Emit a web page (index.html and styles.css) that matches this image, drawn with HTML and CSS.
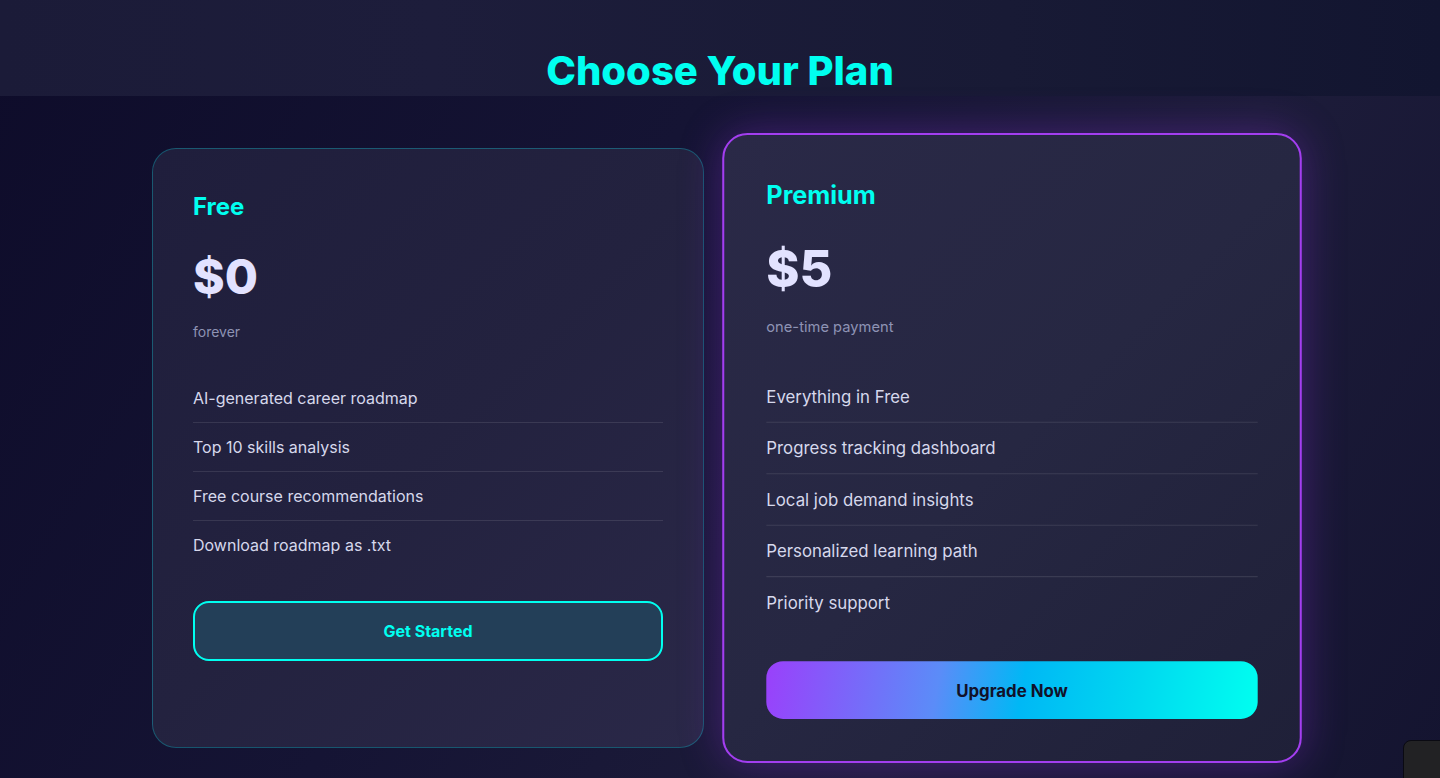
FILE: index.html
```html
<!DOCTYPE html>
<html lang="en">
<head>
<meta charset="utf-8">
<title>Choose Your Plan</title>
<link rel="stylesheet" href="styles.css">
</head>
<body>
<header class="top">
  <h1 class="title">Choose Your Plan</h1>
</header>
<main class="plans">
  <section class="card card-free">
    <h3 class="plan-name">Free</h3>
    <div class="price">$0</div>
    <p class="period">forever</p>
    <ul class="features">
      <li>AI-generated career roadmap</li>
      <li>Top 10 skills analysis</li>
      <li>Free course recommendations</li>
      <li>Download roadmap as .txt</li>
    </ul>
    <button class="btn btn-outline">Get Started</button>
  </section>
  <section class="card card-premium">
    <h3 class="plan-name">Premium</h3>
    <div class="price">$5</div>
    <p class="period">one-time payment</p>
    <ul class="features">
      <li>Everything in Free</li>
      <li>Progress tracking dashboard</li>
      <li>Local job demand insights</li>
      <li>Personalized learning path</li>
      <li>Priority support</li>
    </ul>
    <button class="btn btn-gradient">Upgrade Now</button>
  </section>
</main>
<div class="corner-widget"></div>
</body>
</html>
```
FILE: styles.css
```css
* { box-sizing: border-box; }
html, body { height: 100%; }
body {
  margin: 0;
  font-family: "Inter", "Noto Sans", sans-serif;
  background: linear-gradient(120deg, #0e0c2a 0%, #151434 40%, #1d1c3a 70%, #141430 100%);
  color: #e0e0ff;
  overflow: hidden;
  position: relative;
}
.top {
  height: 96px;
  background: linear-gradient(90deg, #1b1b38 0%, #1d1d3b 30%, #181a35 70%, #121530 100%);
  display: flex;
  justify-content: center;
  align-items: flex-end;
}
.title {
  margin: 0 0 1px;
  font-size: 40px;
  line-height: 48px;
  font-weight: 800;
  color: #00fff0;
  letter-spacing: 0;
}
.plans {
  max-width: 1136px;
  margin: 0 auto;
  padding-top: 52px;
  display: grid;
  grid-template-columns: 1fr 1fr;
  gap: 32px;
}
.card {
  border-radius: 24px;
  padding: 40px;
  background: linear-gradient(135deg, #1f1e3c 0%, #23223f 50%, #2a2848 100%);
  display: flex;
  flex-direction: column;
  height: 600px;
}
.card-free {
  border: 1px solid rgba(0, 230, 240, 0.28);
}
.card-premium {
  border: 2px solid #a33ef0;
  transform: scale(1.05);
  background: linear-gradient(135deg, #2a2947 0%, #262742 50%, #1f2038 100%);
  box-shadow: 0 0 40px rgba(150, 50, 230, 0.35);
}
.plan-name {
  margin: 2px 0 0;
  font-size: 24px;
  line-height: 32px;
  font-weight: 700;
  color: #00fff0;
}
.price {
  margin-top: 25px;
  font-size: 48px;
  line-height: 58px;
  font-weight: 800;
  color: #e2e2ff;
}
.period {
  margin: 16px 0 0;
  font-size: 14px;
  line-height: 20px;
  color: #8e93b4;
}
.features {
  list-style: none;
  margin: 32px 0 0;
  padding: 0;
}
.features li {
  padding: 12px 0;
  font-size: 16px;
  line-height: 24px;
  color: #d6d8ec;
  border-bottom: 1px solid rgba(255, 255, 255, 0.1);
}
.features li:last-child { border-bottom: none; }
.btn {
  margin-top: 32px;
  width: 100%;
  height: 60px;
  border-radius: 16px;
  font-family: inherit;
  font-size: 16px;
  font-weight: 700;
  cursor: pointer;
}
.btn-outline {
  border: 2px solid #00fff0;
  background: #233f58;
  color: #00fff0;
}
.btn-gradient {
  border: none;
  height: 56px;
  background: linear-gradient(100deg, #9a40fb 0%, #5b8cf8 35%, #00b8f5 52%, #00d8f0 75%, #00fff0 100%);
  color: #111129;
}
.corner-widget {
  position: absolute;
  left: 1403px;
  top: 740px;
  width: 60px;
  height: 60px;
  border-radius: 8px;
  background: #222224;
  border: 1px solid #0a0a12;
}
```
